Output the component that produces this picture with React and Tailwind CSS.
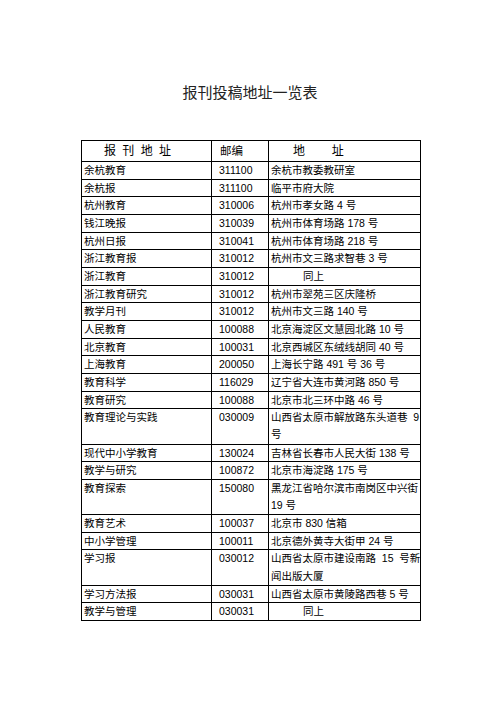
const rows = [
  ['余杭教育', '311100', '余杭市教委教研室'],
  ['余杭报', '311100', '临平市府大院'],
  ['杭州教育', '310006', '杭州市孝女路 4 号'],
  ['钱江晚报', '310039', '杭州市体育场路 178 号'],
  ['杭州日报', '310041', '杭州市体育场路 218 号'],
  ['浙江教育报', '310012', '杭州市文三路求智巷 3 号'],
  ['浙江教育', '310012', 'same'],
  ['浙江教育研究', '310012', '杭州市翠苑三区庆隆桥'],
  ['教学月刊', '310012', '杭州市文三路 140 号'],
  ['人民教育', '100088', '北京海淀区文慧园北路 10 号'],
  ['北京教育', '100031', '北京西城区东绒线胡同 40 号'],
  ['上海教育', '200050', '上海长宁路 491 号 36 号'],
  ['教育科学', '116029', '辽宁省大连市黄河路 850 号'],
  ['教育研究', '100088', '北京市北三环中路 46 号'],
  ['教育理论与实践', '030009', ['山西省太原市解放路东头道巷  9', '号']],
  ['现代中小学教育', '130024', '吉林省长春市人民大街 138 号'],
  ['教学与研究', '100872', '北京市海淀路 175 号'],
  ['教育探索', '150080', ['黑龙江省哈尔滨市南岗区中兴街', '19 号']],
  ['教育艺术', '100037', '北京市 830 信箱'],
  ['中小学管理', '100011', '北京德外黄寺大街甲 24 号'],
  ['学习报', '030012', ['山西省太原市建设南路  15  号新', '闻出版大厦']],
  ['学习方法报', '030031', '山西省太原市黄陵路西巷 5 号'],
  ['教学与管理', '030031', 'same'],
]

function Address({ value }) {
  if (value === 'same') return <span className="pl-[32px]">同上</span>
  if (Array.isArray(value)) {
    return (
      <>
        <span className="block whitespace-pre leading-[17.15px]">{value[0]}</span>
        <span className="block leading-[17.15px]">{value[1]}</span>
      </>
    )
  }
  return value
}

export default function App() {
  return (
    <div
      className="w-[500px] h-[706px] bg-white text-black"
      style={{ fontFamily: '"Liberation Sans", "Noto Sans CJK SC", sans-serif' }}
    >
      <div className="pt-[83px] text-center text-[15px] leading-[20px] text-[#222]">报刊投稿地址一览表</div>

      <table className="ml-[81px] mt-[37px] w-[339px] border-collapse text-[10.5px] table-fixed">
        <colgroup>
          <col className="w-[130px]" />
          <col className="w-[57px]" />
          <col className="w-[152px]" />
        </colgroup>
        <thead>
          <tr>
            <th className="h-[21px] p-0 border border-black pl-[22px] text-left text-[12px] leading-[19px] font-normal tracking-[1.5px]">报 刊 地 址</th>
            <th className="h-[21px] p-0 border border-black pl-[8px] text-left text-[11.5px] leading-[19px] font-normal">邮编</th>
            <th className="h-[21px] p-0 border border-black pl-[24px] text-left text-[12px] leading-[19px] font-normal whitespace-pre">地        址</th>
          </tr>
        </thead>
        <tbody>
          {rows.map(([name, code, addr]) => (
            <tr key={name} className="align-top">
              <td className="p-0 border border-black pl-[2px] leading-[16.65px]">{name}</td>
              <td className="p-0 border border-black pl-[7px] leading-[16.65px]">{code}</td>
              <td className="p-0 border border-black pl-[2px] leading-[16.65px]">
                <Address value={addr} />
              </td>
            </tr>
          ))}
        </tbody>
      </table>
    </div>
  )
}
